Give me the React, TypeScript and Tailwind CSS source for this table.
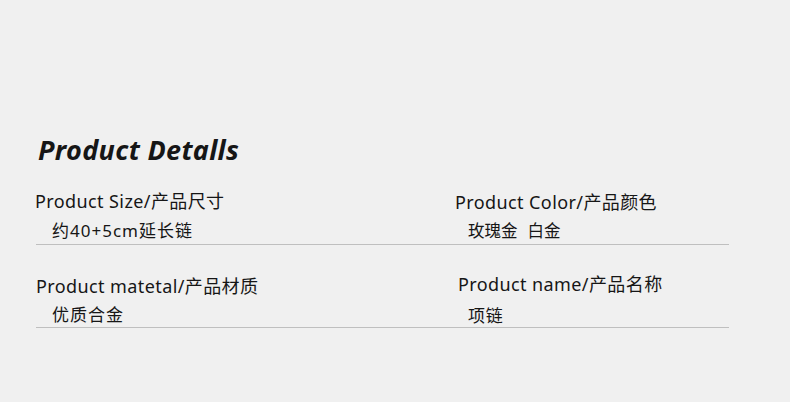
import React from 'react';

type Item = { label: string; value: string[]; pt: string; labelPl: string; valuePl: string; valueMt: string; valueCls: string };

const rows: { mt: string; lineMt: string; items: Item[] }[] = [
  {
    mt: 'mt-[22px]',
    lineMt: 'mt-[2px]',
    items: [
      { label: 'Product Size/产品尺寸', value: ['约40+5cm延长链'], pt: 'pt-0', labelPl: 'pl-0', valuePl: 'pl-[17px]', valueMt: 'mt-[7px]', valueCls: 'text-[17px] tracking-[1px]' },
      { label: 'Product Color/产品颜色', value: ['玫瑰金', '白金'], pt: 'pt-[1px]', labelPl: 'pl-0', valuePl: 'pl-[13px]', valueMt: 'mt-[6px]', valueCls: 'text-[16.5px] tracking-[0px]' },
    ],
  },
  {
    mt: 'mt-[27px]',
    lineMt: 'mt-0',
    items: [
      { label: 'Product matetal/产品材质', value: ['优质合金'], pt: 'pt-[2px]', labelPl: 'pl-[1px]', valuePl: 'pl-[17px]', valueMt: 'mt-[6px]', valueCls: 'text-[17px] tracking-[1px]' },
      { label: 'Product name/产品名称', value: ['项链'], pt: 'pt-0', labelPl: 'pl-[3px]', valuePl: 'pl-[13px]', valueMt: 'mt-[9px]', valueCls: 'text-[17px] tracking-[0.75px]' },
    ],
  },
];

export default function App() {
  return (
    <div
      className="w-[790px] h-[402px] bg-[#f0f0f0] text-[#161616] overflow-hidden"
      style={{ fontFamily: '"Noto Sans", "Noto Sans CJK SC", sans-serif' }}
    >
      <div className="pt-[133px] pl-[38px]">
        <h2 className="text-[27px] leading-[34px] font-bold italic tracking-[0.35px]">Product Detalls</h2>
      </div>

      {rows.map((row, i) => (
        <div key={i} className={row.mt}>
          <div className="grid grid-cols-[420px_1fr] pl-[35px]">
            {row.items.map((item) => (
              <div key={item.label} className={item.pt}>
                <div className={`text-[18px] leading-[24px] tracking-[0.4px] ${item.labelPl}`}>{item.label}</div>
                <div className={`flex gap-[10px] leading-[22px] ${item.valueCls} ${item.valueMt} ${item.valuePl}`}>
                  {item.value.map((v) => (
                    <span key={v}>{v}</span>
                  ))}
                </div>
              </div>
            ))}
          </div>
          <div className={`ml-[36px] w-[693px] border-b border-[#bfbfbf] ${row.lineMt}`} />
        </div>
      ))}
    </div>
  );
}
